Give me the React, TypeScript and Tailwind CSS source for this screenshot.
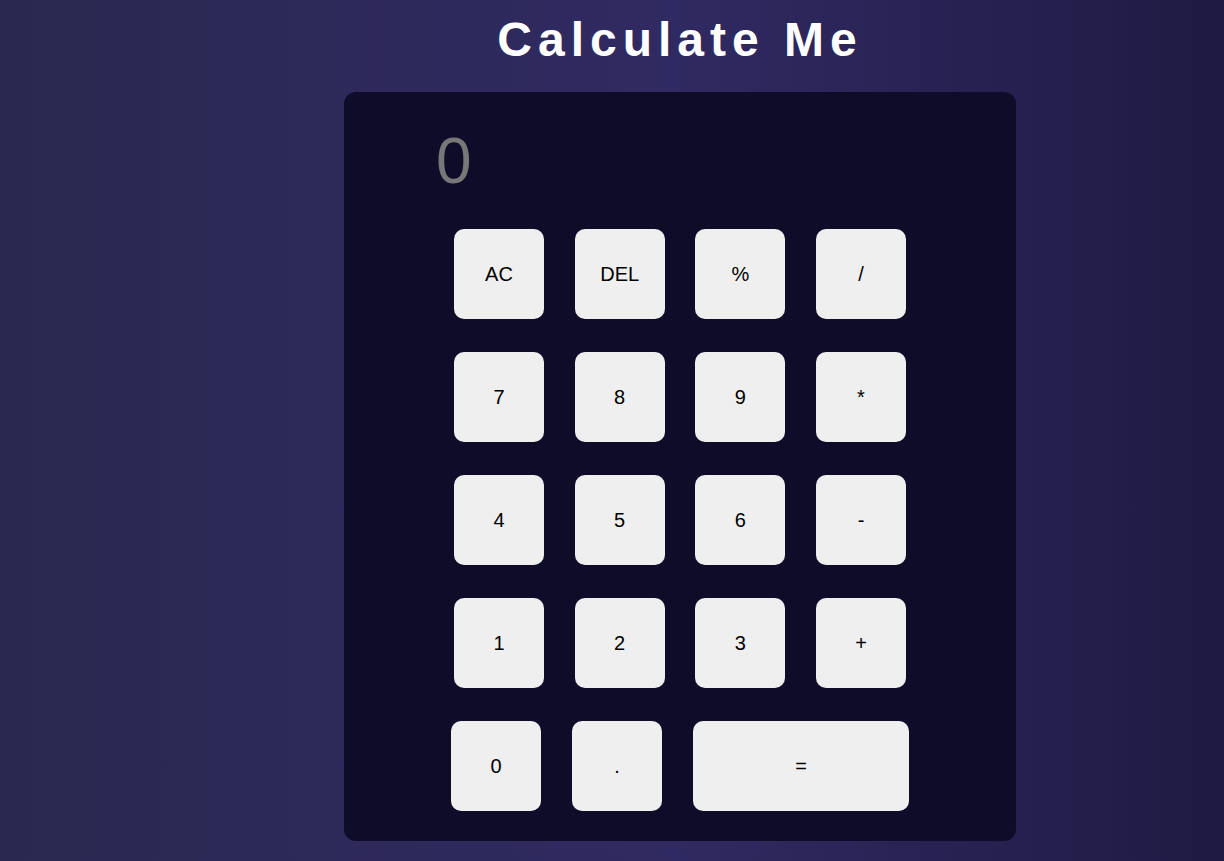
import React from "react";

const rows: string[][] = [
  ["AC", "DEL", "%", "/"],
  ["7", "8", "9", "*"],
  ["4", "5", "6", "-"],
  ["1", "2", "3", "+"],
];

function Key({ label, wide = false }: { label: string; wide?: boolean }) {
  return (
    <button
      className={`${wide ? "w-[216px]" : "w-[90px]"} h-[90px] rounded-[10px] bg-[#efefef] text-black text-[20px] leading-none flex items-center justify-center`}
    >
      {label}
    </button>
  );
}

export default function App() {
  return (
    <div
      className="min-h-screen w-full flex flex-col items-center pl-[136px] bg-[linear-gradient(to_right,#2a2850,#302a62_55%,#1f1a43)]"
      style={{ fontFamily: '"Liberation Sans", Arial, sans-serif' }}
    >
      <h1 className="pt-[16px] h-[92px] text-[48px] leading-none font-bold text-white tracking-[6px]">
        Calculate Me
      </h1>
      <div className="w-[672px] h-[749px] rounded-[12px] bg-[#0f0c29] flex flex-col">
        <div className="h-[137px] pt-[37px] pl-[92px] text-[64px] leading-none text-[#777777]">
          0
        </div>
        <div className="flex flex-col gap-[33px] items-center">
          {rows.map((r, i) => (
            <div key={i} className="flex gap-[30.67px]">
              {r.map((k) => (
                <Key key={k} label={k} />
              ))}
            </div>
          ))}
          <div className="flex gap-[31px]">
            <Key label="0" />
            <Key label="." />
            <Key label="=" wide />
          </div>
        </div>
      </div>
    </div>
  );
}
